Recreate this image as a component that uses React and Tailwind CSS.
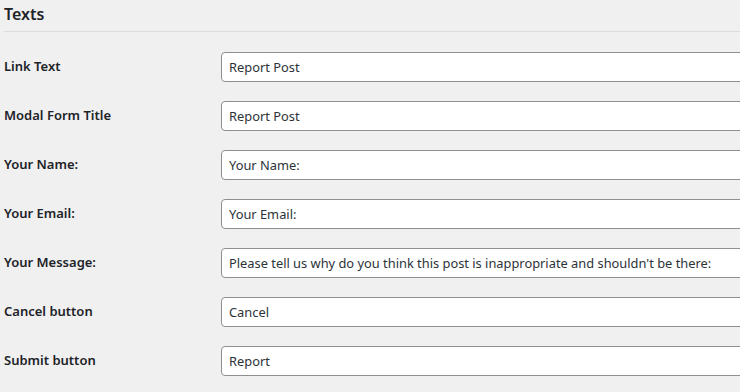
const fields = [
  { label: 'Link Text', value: 'Report Post' },
  { label: 'Modal Form Title', value: 'Report Post' },
  { label: 'Your Name:', value: 'Your Name:' },
  { label: 'Your Email:', value: 'Your Email:' },
  { label: 'Your Message:', value: "Please tell us why do you think this post is inappropriate and shouldn't be there:" },
  { label: 'Cancel button', value: 'Cancel' },
  { label: 'Submit button', value: 'Report' },
]

function App() {
  return (
    <div className="h-[392px] w-[740px] overflow-hidden bg-[#f0f0f1] pl-1 text-[#1d2327] font-['Noto_Sans',sans-serif]">
      <h2 className="pt-[3px] text-[16px] leading-[22px] font-semibold">Texts</h2>
      <div className="mt-[6px] h-px w-[800px] bg-[#dcdcde]" />
      <div className="flex flex-col gap-[19px] pt-5">
        {fields.map((f) => (
          <div key={f.label} className="flex items-center">
            <label className="w-[217px] shrink-0 text-[13px] font-semibold">{f.label}</label>
            <input
              type="text"
              defaultValue={f.value}
              className="h-[30px] w-[560px] shrink-0 rounded-[4px] border border-[#8c8f94] bg-white px-[7px] text-[12.85px] text-[#2c3338] outline-none"
            />
          </div>
        ))}
      </div>
    </div>
  )
}

export default App
